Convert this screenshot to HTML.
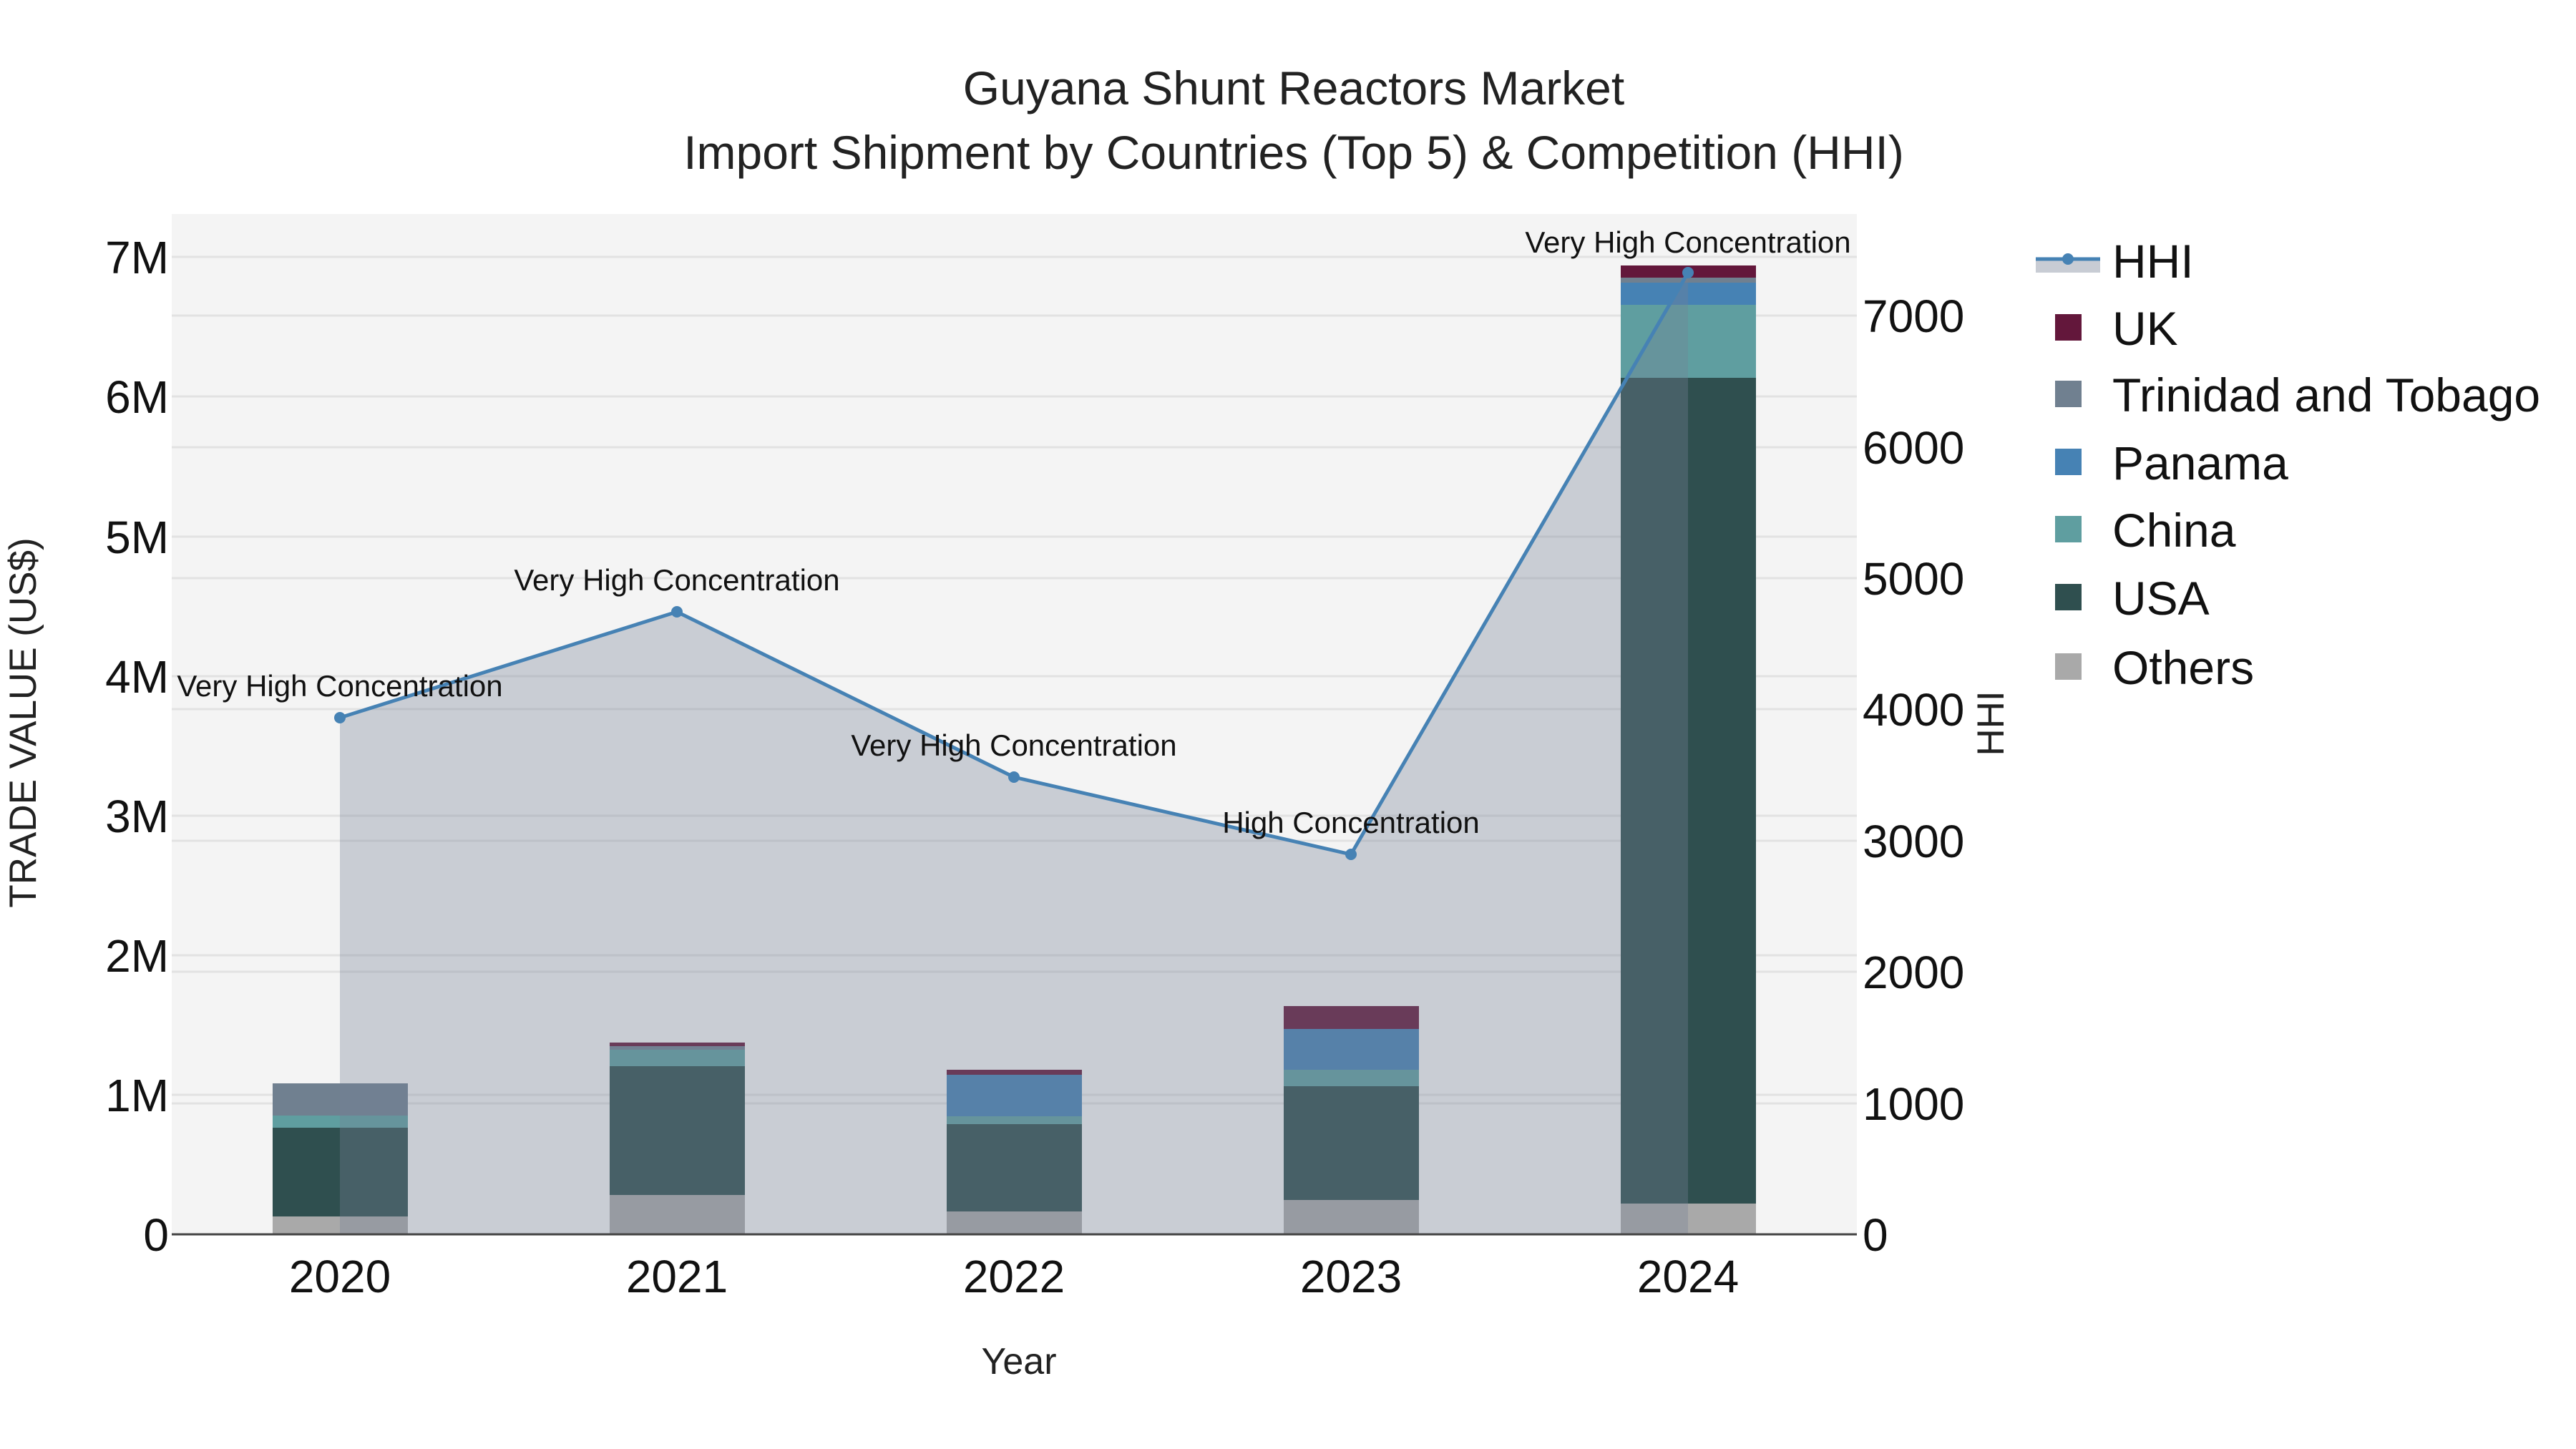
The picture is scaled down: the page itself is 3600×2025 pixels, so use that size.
<!DOCTYPE html>
<html><head><meta charset="utf-8"><style>
html,body{margin:0;padding:0;background:#fff}
svg{display:block;font-family:"Liberation Sans",sans-serif}
</style></head><body>
<svg width="3600" height="2025" viewBox="0 0 3600 2025" xmlns="http://www.w3.org/2000/svg">
<rect x="0" y="0" width="3600" height="2025" fill="#fff"/>
<text x="1808" y="146" font-size="66" text-anchor="middle" fill="#222">Guyana Shunt Reactors Market</text>
<text x="1808" y="236" font-size="66" text-anchor="middle" fill="#222">Import Shipment by Countries (Top 5) &amp; Competition (HHI)</text>
<rect x="240" y="299" width="2355" height="1426" fill="#f4f4f4"/>
<g stroke="#e2e2e2" stroke-width="3">
<line x1="240" x2="2595" y1="1530" y2="1530"/><line x1="240" x2="2595" y1="1335" y2="1335"/>
<line x1="240" x2="2595" y1="1140" y2="1140"/><line x1="240" x2="2595" y1="945" y2="945"/>
<line x1="240" x2="2595" y1="750" y2="750"/><line x1="240" x2="2595" y1="554" y2="554"/>
<line x1="240" x2="2595" y1="359" y2="359"/>
<line x1="240" x2="2595" y1="1542" y2="1542"/><line x1="240" x2="2595" y1="1358" y2="1358"/>
<line x1="240" x2="2595" y1="1175" y2="1175"/><line x1="240" x2="2595" y1="991" y2="991"/>
<line x1="240" x2="2595" y1="808" y2="808"/><line x1="240" x2="2595" y1="625" y2="625"/>
<line x1="240" x2="2595" y1="441" y2="441"/>
</g>
<g>
<rect x="381" y="1700" width="189" height="25" fill="#a9a9a9"/>
<rect x="381" y="1576" width="189" height="124" fill="#2f4f4f"/>
<rect x="381" y="1559" width="189" height="17" fill="#5f9ea0"/>
<rect x="381" y="1514" width="189" height="45" fill="#708090"/>
<rect x="852" y="1670" width="189" height="55" fill="#a9a9a9"/>
<rect x="852" y="1490" width="189" height="180" fill="#2f4f4f"/>
<rect x="852" y="1467" width="189" height="23" fill="#5f9ea0"/>
<rect x="852" y="1462" width="189" height="5" fill="#708090"/>
<rect x="852" y="1457" width="189" height="5" fill="#63173b"/>
<rect x="1323" y="1693" width="189" height="32" fill="#a9a9a9"/>
<rect x="1323" y="1571" width="189" height="122" fill="#2f4f4f"/>
<rect x="1323" y="1560" width="189" height="11" fill="#5f9ea0"/>
<rect x="1323" y="1502" width="189" height="58" fill="#4682b4"/>
<rect x="1323" y="1495" width="189" height="7" fill="#63173b"/>
<rect x="1794" y="1677" width="189" height="48" fill="#a9a9a9"/>
<rect x="1794" y="1518" width="189" height="159" fill="#2f4f4f"/>
<rect x="1794" y="1495" width="189" height="23" fill="#5f9ea0"/>
<rect x="1794" y="1438" width="189" height="57" fill="#4682b4"/>
<rect x="1794" y="1406" width="189" height="32" fill="#63173b"/>
<rect x="2265" y="1682" width="189" height="43" fill="#a9a9a9"/>
<rect x="2265" y="528" width="189" height="1154" fill="#2f4f4f"/>
<rect x="2265" y="426" width="189" height="102" fill="#5f9ea0"/>
<rect x="2265" y="395" width="189" height="31" fill="#4682b4"/>
<rect x="2265" y="388" width="189" height="7" fill="#708090"/>
<rect x="2265" y="371" width="189" height="17" fill="#63173b"/>
</g>
<polygon points="475,1725 475,1003 946,855 1417,1086 1888,1194 2359,381 2359,1725" fill="rgba(118,128,150,0.34)"/>
<line x1="240" x2="2595" y1="1725" y2="1725" stroke="#444" stroke-width="3"/>
<polyline points="475,1003 946,855 1417,1086 1888,1194 2359,381" fill="none" stroke="#4682b4" stroke-width="5"/>
<g fill="#4682b4"><circle cx="475" cy="1003" r="8"/><circle cx="946" cy="855" r="8"/><circle cx="1417" cy="1086" r="8"/><circle cx="1888" cy="1194" r="8"/><circle cx="2359" cy="381" r="8"/></g>
<g font-size="42" text-anchor="middle" fill="#111">
<text x="475" y="973">Very High Concentration</text>
<text x="946" y="825">Very High Concentration</text>
<text x="1417" y="1056">Very High Concentration</text>
<text x="1888" y="1164">High Concentration</text>
<text x="2359" y="353">Very High Concentration</text>
</g>
<g font-size="64" text-anchor="end" fill="#111">
<text x="236" y="1748">0</text><text x="236" y="1553">1M</text><text x="236" y="1358">2M</text>
<text x="236" y="1163">3M</text><text x="236" y="968">4M</text><text x="236" y="773">5M</text>
<text x="236" y="577">6M</text><text x="236" y="382">7M</text>
</g>
<g font-size="64" fill="#111">
<text x="2603" y="1748">0</text><text x="2603" y="1565">1000</text><text x="2603" y="1381">2000</text>
<text x="2603" y="1198">3000</text><text x="2603" y="1014">4000</text><text x="2603" y="831">5000</text>
<text x="2603" y="648">6000</text><text x="2603" y="464">7000</text>
</g>
<g font-size="64" text-anchor="middle" fill="#111">
<text x="475" y="1806">2020</text><text x="946" y="1806">2021</text><text x="1417" y="1806">2022</text>
<text x="1888" y="1806">2023</text><text x="2359" y="1806">2024</text>
</g>
<text x="1424" y="1920" font-size="52" text-anchor="middle" fill="#222">Year</text>
<text transform="translate(50,1010) rotate(-90)" font-size="53" text-anchor="middle" fill="#222">TRADE VALUE (US$)</text>
<text transform="translate(2800,1011) rotate(-90)" font-size="53" text-anchor="middle" fill="#222">HHI</text>
<rect x="2845" y="364" width="90" height="17" fill="#c8ccd4"/>
<line x1="2845" x2="2935" y1="362" y2="362" stroke="#4682b4" stroke-width="5"/>
<circle cx="2890" cy="362" r="8" fill="#4682b4"/>
<rect x="2872" y="439" width="37" height="37" fill="#63173b"/>
<rect x="2872" y="532" width="37" height="37" fill="#708090"/>
<rect x="2872" y="627" width="37" height="37" fill="#4682b4"/>
<rect x="2872" y="721" width="37" height="37" fill="#5f9ea0"/>
<rect x="2872" y="816" width="37" height="37" fill="#2f4f4f"/>
<rect x="2872" y="913" width="37" height="37" fill="#a9a9a9"/>
<g font-size="66" fill="#111">
<text x="2952" y="388">HHI</text><text x="2952" y="482">UK</text>
<text x="2952" y="575">Trinidad and Tobago</text><text x="2952" y="670">Panama</text>
<text x="2952" y="764">China</text><text x="2952" y="859">USA</text><text x="2952" y="956">Others</text>
</g>
</svg>
</body></html>
